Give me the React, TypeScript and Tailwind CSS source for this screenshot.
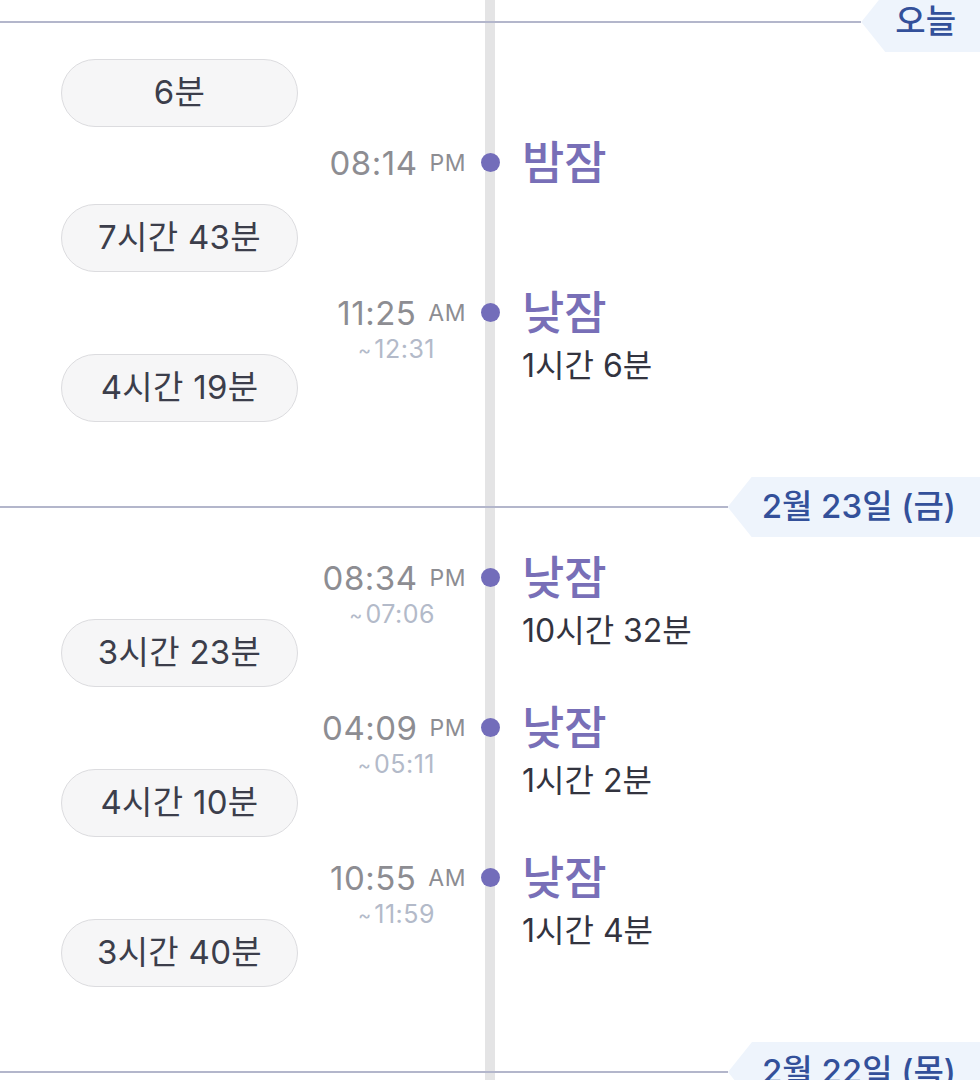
import React from 'react';

type Row =
  | { kind: 'pill'; label: string; h?: string }
  | { kind: 'entry'; time: string; ampm: string; until?: string; title: string; duration?: string };

interface Section {
  date: string;
  rows: Row[];
}

const sections: Section[] = [
  {
    date: '오늘',
    rows: [
      { kind: 'pill', label: '6분', h: 'h-[70px]' },
      { kind: 'entry', time: '08:14', ampm: 'PM', title: '밤잠' },
      { kind: 'pill', label: '7시간 43분' },
      { kind: 'entry', time: '11:25', ampm: 'AM', until: '12:31', title: '낮잠', duration: '1시간 6분' },
      { kind: 'pill', label: '4시간 19분' },
    ],
  },
  {
    date: '2월 23일 (금)',
    rows: [
      { kind: 'entry', time: '08:34', ampm: 'PM', until: '07:06', title: '낮잠', duration: '10시간 32분' },
      { kind: 'pill', label: '3시간 23분' },
      { kind: 'entry', time: '04:09', ampm: 'PM', until: '05:11', title: '낮잠', duration: '1시간 2분' },
      { kind: 'pill', label: '4시간 10분' },
      { kind: 'entry', time: '10:55', ampm: 'AM', until: '11:59', title: '낮잠', duration: '1시간 4분' },
      { kind: 'pill', label: '3시간 40분' },
    ],
  },
];

const DateHeader: React.FC<{ date: string }> = ({ date }) => (
  <div className="relative z-10 flex h-[60px] items-center">
    <div className="h-[2px] flex-1 bg-[#b3b6cb]" />
    <div className="flex h-[60px] items-center bg-[#eef4fc] pl-[34px] pr-[24px] text-[33px] font-medium text-[#33509a] [clip-path:polygon(24px_0,100%_0,100%_100%,24px_100%,0_50%)]">
      {date}
    </div>
  </div>
);

const PillRow: React.FC<{ label: string; h?: string }> = ({ label, h = 'h-[75px]' }) => (
  <div className={`${h} pl-[61px] pt-[4px]`}>
    <div className="flex h-[68px] w-[237px] items-center justify-center rounded-full border border-[#dcdcdf] bg-[#f6f6f7] text-[33px] tracking-[0.3px] text-[#3c3e4b]">
      {label}
    </div>
  </div>
);

const EntryRow: React.FC<Extract<Row, { kind: 'entry' }>> = ({ time, ampm, until, title, duration }) => (
  <div className="flex h-[75px] pt-[13px]">
    <div className="flex w-[470px] flex-col items-end pr-[4px]">
      <div className="flex h-[48px] items-center pt-[3px] text-[#8d8d92]">
        <span className="text-[33px] tracking-[0.5px]">{time}</span>
        <span className="ml-[12px] text-[23px] tracking-[0.5px]">{ampm}</span>
      </div>
      {until && (
        <div className="flex h-[28px] items-center pr-[31px] text-[#b3bac9]">
          <span className="mr-[3px] text-[20px]">~</span>
          <span className="text-[25px] tracking-[0.5px]">{until}</span>
        </div>
      )}
    </div>
    <div className="flex h-[48px] w-[40px] items-center justify-center">
      <div className="relative z-10 h-[19px] w-[19px] rounded-full bg-[#736dba]" />
    </div>
    <div className="flex flex-col pl-[12px]">
      <div className="flex h-[48px] items-center text-[46px] font-medium text-[#786fb7]">{title}</div>
      {duration && (
        <div className="mt-[12px] flex h-[36px] items-center text-[32px] text-[#33343f]">{duration}</div>
      )}
    </div>
  </div>
);

export default function App() {
  return (
    <div
      className="relative h-[1080px] w-[980px] overflow-hidden bg-white"
      style={{ fontFamily: 'Inter, "Noto Sans CJK KR", sans-serif' }}
    >
      <div className="absolute bottom-0 left-[485px] top-0 z-0 w-[10px] bg-[#e4e4e5]" />
      <div className="-mt-[8px]">
        {sections.map((s, i) => (
          <div key={i} className="pb-[52px]">
            <DateHeader date={s.date} />
            <div className="mt-[3px]">
              {s.rows.map((r, j) =>
                r.kind === 'pill' ? (
                  <PillRow key={j} label={r.label} h={r.h} />
                ) : (
                  <EntryRow key={j} {...r} />
                )
              )}
            </div>
          </div>
        ))}
        <DateHeader date="2월 22일 (목)" />
      </div>
    </div>
  );
}
